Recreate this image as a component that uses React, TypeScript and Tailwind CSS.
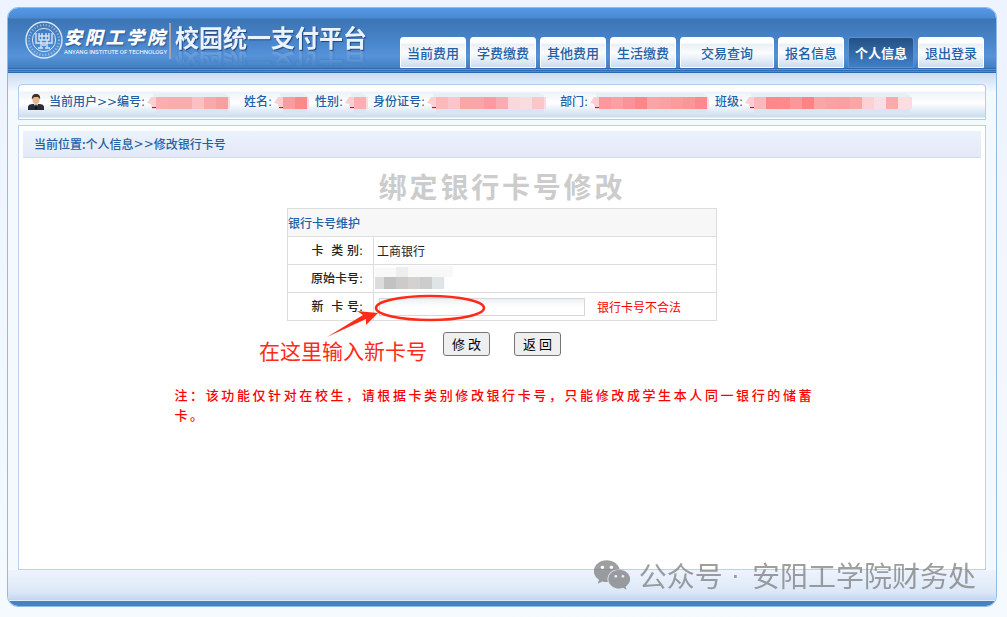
import { FaWeixin } from 'react-icons/fa';

const tabs = [
  { label: '当前费用' },
  { label: '学费缴费' },
  { label: '其他费用' },
  { label: '生活缴费' },
  { label: '交易查询', wide: true },
  { label: '报名信息' },
  { label: '个人信息', active: true },
  { label: '退出登录' },
];

// every hidden value is shown as a strip of 12px cells
const userFields = [
  {
    label: '当前用户>>编号:',
    width: 'w-[195px]',
    cells: ['#faaeb1', '#faabae', '#faabae', '#fbc0c3', '#faa8ac', '#f99fa4'],
  },
  { label: '姓名:', width: 'w-[71px]', cells: ['#fa9ba0', '#fa8a8c'] },
  { label: '性别:', width: 'w-[58px]', cells: ['#fcaeb2'] },
  {
    label: '身份证号:',
    width: 'w-[187px]',
    cells: ['#fbb9bb', '#fac6cb', '#faa6a6', '#fba5ab', '#fd99a3', '#fbabb3', '#f9d7db', '#f8dde0', '#fac6ca'],
  },
  {
    label: '部门:',
    width: 'w-[155px]',
    cells: ['#fd96a0', '#fb9fa4', '#fc9299', '#fe868b', '#fca3a5', '#fda0a3', '#fd9b9b', '#fa9698', '#fb898d'],
  },
  {
    label: '班级:',
    width: 'w-[210px]',
    cells: ['#fbb8bc', '#fd878c', '#fe898d', '#fc969a', '#fe8286', '#fba5a9', '#fca0a4', '#fb9fa0', '#fba5a6', '#fad2d6', '#f7e0e5', '#fda8ac', '#fbdde2'],
  },
];

function Mosaic({ cells }: { cells: string[] }) {
  const end = 9 + cells.length * 12;
  return (
    <svg width={end + 6} height={26} className="mt-0.5 ml-0.5 shrink-0" aria-hidden="true">
      <path d={`M6 3H${end - 4}l4 3v19H9z`} fill="#e6eef6" />
      <path d={`M9 18H${end}v7H9z`} fill="#d8e5f3" />
      <path d="M0 13L4 7H9V19H5L4 14z" fill="#fbcfd1" />
      {cells.map((color, i) => (
        <rect key={i} x={9 + i * 12} y={7} width={12} height={12} fill={color} />
      ))}
      <path d={`M${end} 7h2v12h-2z`} fill="#f8dce2" />
      <path d="M5 17h4v1H5z" fill="#f00" />
    </svg>
  );
}

function Emblem() {
  return (
    <svg width="40" height="40" viewBox="0 0 40 40" fill="none" stroke="#d5e5f8" aria-hidden="true">
      <circle cx="20" cy="20" r="18" strokeWidth="1.4" />
      <circle cx="20" cy="20" r="15" strokeWidth="2.4" strokeDasharray="1.2 1.8" opacity=".5" />
      <circle cx="20" cy="20" r="11.6" strokeWidth="1" />
      <path d="M12 13v10h4M28 13v10h-4M15 13v7h10v-7M15 16h10M18 13v7M22 13v7M16 23h8M17 20v8M23 20v8M14 28h5M21 28h5M18 25h4" strokeWidth="1.4" />
    </svg>
  );
}

function PersonIcon() {
  return (
    <svg width="16" height="17" viewBox="0 0 16 17" className="shrink-0" aria-hidden="true">
      <path d="M0 16v-3c0-2 2-3 5-3h6c3 0 5 1 5 3v3z" fill="#292d35" />
      <path d="M5.5 9h5L8 14z" fill="#fff" />
      <path d="M7.4 10.500h1.200l.6 4L8 16l-1.200-1.500z" fill="#111" />
      <ellipse cx="8" cy="5.500" rx="3.500" ry="4.500" fill="#e5b98a" />
      <path d="M4 5.500C3.500 2 5 0 8 0s4.800 2 4 5.500C11 3 10 3 8 3S5 3.500 4 5.500z" fill="#433022" />
    </svg>
  );
}

function Header() {
  return (
    <header>
      <div className="flex h-[60px] items-end justify-between bg-[linear-gradient(#5598e8_0px,#4b8ad3_10px,#3c74b4_11px,#4a86cc_35px,#5592d8_48px,#427fc0_60px)] pr-3">
        <div className="flex h-full items-start pt-3 pl-4">
          <Emblem />
          <div className="mt-1 flex w-[101px] flex-col">
            <div className="flex justify-between text-[18px] leading-6 font-black text-white italic [text-shadow:1px_1px_2px_#28548c]">
              {'安阳工学院'.split('').map((char) => (
                <span key={char}>{char}</span>
              ))}
            </div>
            <span className="text-[6px] leading-2 whitespace-nowrap text-white [font-family:Roboto,sans-serif]">
              ANYANG INSTITUTE OF TECHNOLOGY
            </span>
          </div>
          <div className="mt-[3px] ml-1 h-9 w-0.5 bg-[#a5a5aa]" />
          <h1 className="mt-px ml-1 text-[24px] leading-8 font-bold whitespace-nowrap text-[#eaf2fd] [-webkit-box-reflect:below_-5px_linear-gradient(transparent_40%,rgba(255,255,255,0.2))] [text-shadow:1px_1px_1px_#1e467c]">
            校园统一支付平台
          </h1>
        </div>
        <nav className="flex shrink-0 gap-1">
          {tabs.map((tab) => (
            <a
              key={tab.label}
              href="#"
              className={`flex h-[31px] items-center justify-center rounded-t-[3px] border text-[13px] whitespace-nowrap ${
                tab.wide ? 'w-[94px]' : 'w-[66px]'
              } ${
                tab.active
                  ? 'border-[#5590d0] bg-linear-to-b from-[#245082] to-[#3f80c9] font-bold text-white'
                  : 'border-white bg-[linear-gradient(#fff_0px,#fff_5px,#eaeff5_6px,#fbfcfd_15px,#c8daf0_30px)] font-medium text-[#2260a6]'
              }`}
            >
              {tab.label}
            </a>
          ))}
        </nav>
      </div>
      <div className="h-[5px] border-y border-[#2f68ae] bg-[linear-gradient(#5c97dc_1px,#2e6db8_1px,#2e6db8_2px,#4d8ad2_2px)]" />
    </header>
  );
}

function UserBar() {
  return (
    <div className="flex h-9 items-center overflow-hidden rounded-t-[4px] border border-[#b5cbe8] bg-[linear-gradient(#fff_0px,#fff_6px,#edf2f7_7px,#fff_18px,#c9dcf1_32px,#fff_33px)] pl-[9px] text-xs font-medium text-[#2260a6] [font-family:'DejaVu_Sans','Noto_Sans_CJK_SC',sans-serif]">
      <PersonIcon />
      <div className="ml-[5px] flex">
        {userFields.map((field) => (
          <div key={field.label} className={`flex shrink-0 items-center ${field.width}`}>
            <span className="whitespace-nowrap">{field.label}</span>
            <Mosaic cells={field.cells} />
          </div>
        ))}
      </div>
    </div>
  );
}

function CardForm() {
  const labelCell =
    "h-7 w-[86px] border border-[#ddd] pr-[10px] text-right font-medium whitespace-pre [font-family:'DejaVu_Sans','Noto_Sans_CJK_SC',sans-serif]";
  const valueCell = 'border border-[#ddd] pl-[3px]';

  return (
    <form className="relative w-[430px]">
      <table className="w-full border-collapse text-xs text-[#222]">
        <thead>
          <tr>
            <th colSpan={2} className="h-7 border border-[#ddd] bg-[#f7f7f7] text-left font-medium text-[#2260a6]">
              银行卡号维护
            </th>
          </tr>
        </thead>
        <tbody>
          <tr>
            <th scope="row" className={labelCell}>{'卡  类 别:'}</th>
            <td className={valueCell}>工商银行</td>
          </tr>
          <tr>
            <th scope="row" className={labelCell}>原始卡号:</th>
            <td className="border border-[#ddd] pl-px">
              <svg width="78" height="25" className="block" aria-hidden="true">
                <path d="M0 2h30V0h48v11H70v12H0z" fill="#f8f8f8" />
                <path d="M21 1h12v10H21z" fill="#eee" />
                <path d="M0 11h9v12H0z" fill="#dcdcdc" />
                <path d="M9 11h12v12H9z" fill="#c2c2c2" />
                <path d="M21 11h12v12H21z" fill="#cdcac9" />
                <path d="M33 11h12v12H33z" fill="#d4d2d1" />
                <path d="M45 11h12v12H45z" fill="#cccccd" />
                <path d="M57 11h12v12H57z" fill="#dfe4e6" />
              </svg>
            </td>
          </tr>
          <tr>
            <th scope="row" className={labelCell}>
              <label htmlFor="new-card">{'新  卡 号:'}</label>
            </th>
            <td className="border border-[#ddd] pl-[5px]">
              <div className="flex items-center gap-3">
                <input
                  id="new-card"
                  type="text"
                  className="h-[18px] w-[206px] border border-[#d5d8da] bg-linear-to-b from-[#edf0f3] to-white to-50% px-1 outline-none"
                />
                <span className="text-[#f00]">银行卡号不合法</span>
              </div>
            </td>
          </tr>
        </tbody>
      </table>

      <div className="mt-[11px] flex gap-6 pl-[156px]">
        <button type="button" className="h-6 w-[47px] rounded-[3px] border border-[#767676] bg-[#efefef] text-[13px] whitespace-pre text-black">
          修 改
        </button>
        <button type="button" className="h-6 w-[47px] rounded-[3px] border border-[#767676] bg-[#efefef] text-[13px] whitespace-pre text-black">
          返 回
        </button>
      </div>

      {/* hint drawn over the form */}
      <svg width="162" height="46" className="pointer-events-none absolute top-[86px] left-[38px]" aria-hidden="true">
        <ellipse cx="105" cy="14" rx="54" ry="12" fill="none" stroke="#ff2a17" strokeWidth="2.500" />
        <path d="M2 43L38 21l-6-4L53 19 41 31v-6z" fill="#ff2a17" />
      </svg>
      <p className="pointer-events-none absolute top-[128px] -left-7 text-[21px] leading-7 whitespace-nowrap text-[#ff2a17]">
        在这里输入新卡号
      </p>
    </form>
  );
}

export default function App() {
  return (
    <div className="flex min-h-screen flex-col bg-linear-to-b from-[#edf3ff] to-[#f5faff] pt-[7px] pr-[10px] pb-[10px] pl-[7px] [font-family:'Noto_Sans_CJK_SC',sans-serif]">
      <div className="relative flex flex-1 flex-col overflow-hidden rounded-[11px] border border-[#8fbce4] bg-[#f4f9fe]">
        <Header />
        <main className="flex flex-1 flex-col bg-[linear-gradient(#c8dbf2,#f5faff_20px,transparent_20px)] px-[10px] pt-[11px]">
          <UserBar />
          <section className="mt-[5px] flex flex-1 flex-col border border-[#bfd0ea] bg-white">
            <div className="mx-1 mt-[5px] flex h-[27px] items-center border-b border-[#cfdcf2] bg-linear-to-b from-[#eaf2fc] to-[#e3eaf5] pl-[11px] text-xs font-medium text-[#2260a6]">
              当前位置:个人信息
              <span className="[font-family:'DejaVu_Sans',sans-serif]">&gt;&gt;</span>
              修改银行卡号
            </div>
            <div className="flex flex-col items-center">
              <h2 className="mt-[10px] mb-1 text-[28px] leading-9 font-bold tracking-widest text-[#ccc]">
                绑定银行卡号修改
              </h2>
              <CardForm />
              <p className="mt-[29px] w-[655px] text-[13px] leading-5 font-medium tracking-[0.2em] text-[#f00]">
                注：该功能仅针对在校生，请根据卡类别修改银行卡号，只能修改成学生本人同一银行的储蓄卡。
              </p>
            </div>
          </section>
        </main>
        <footer className="h-9 shrink-0 border-b-[5px] border-[#4980bf] bg-[linear-gradient(#eef4fd,#dce8f8_22px,#c0d7f1_30px,#fff_31px)]" />

        <div className="pointer-events-none absolute right-5 bottom-3 flex items-center text-[28px] leading-9 text-[#777] opacity-70">
          <FaWeixin size={38} className="mr-2" aria-hidden="true" />
          <span>公众号</span>
          <span className="mr-3 ml-2 [font-family:'Liberation_Sans',sans-serif]">·</span>
          <span>安阳工学院财务处</span>
        </div>
      </div>
    </div>
  );
}
